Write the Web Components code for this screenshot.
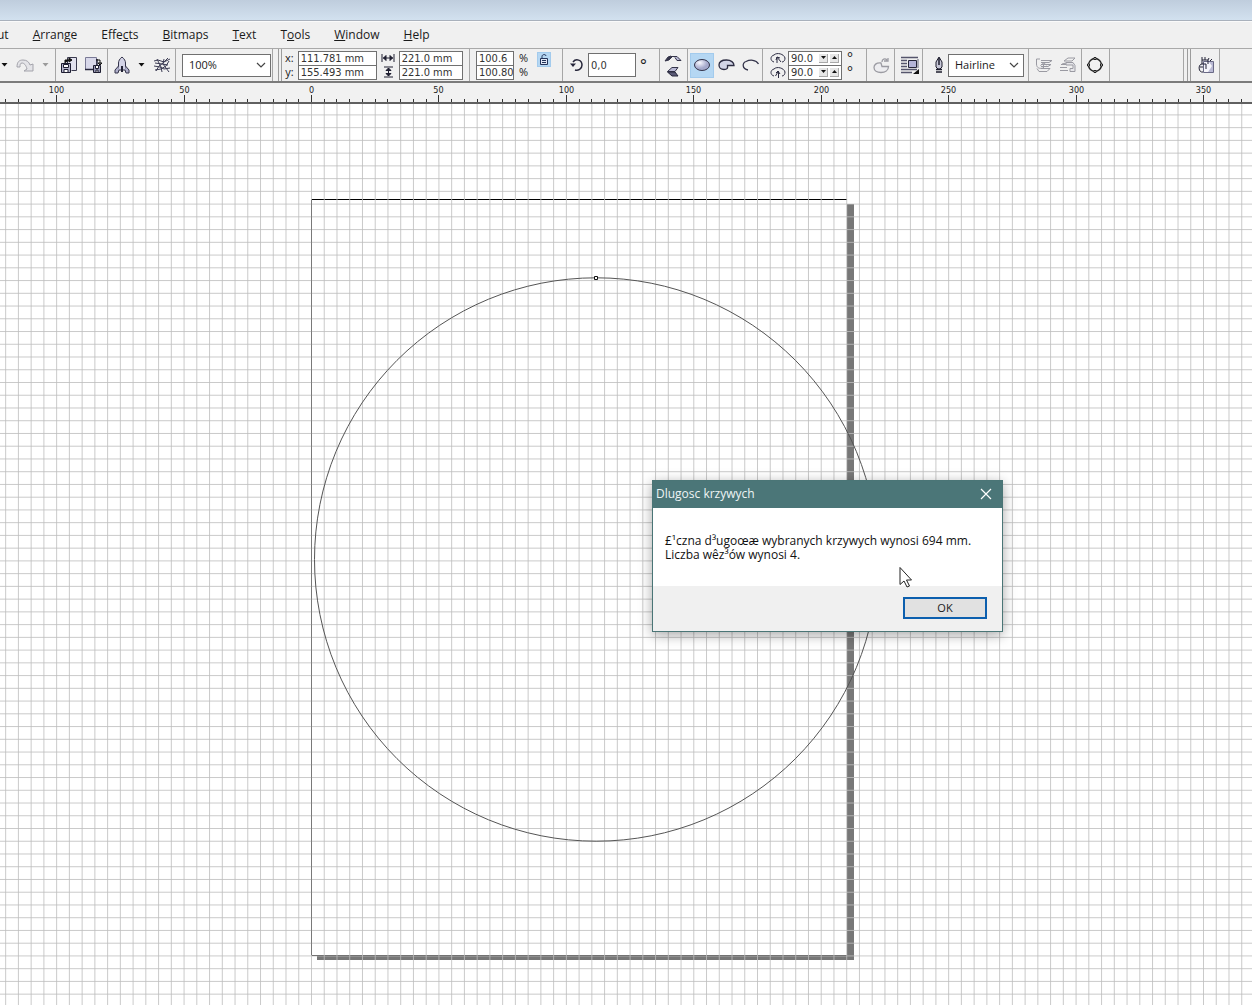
<!DOCTYPE html>
<html lang="en">
<head>
<meta charset="utf-8">
<title>Drawing editor</title>
<style>
html,body{height:100%;margin:0}
body{overflow:hidden;background:#fff;color:#1a1a1a;font:12px/16px "Open Sans","Noto Sans",sans-serif}
</style>
</head>
<body>
<drawing-app></drawing-app>
<script>
const ICONS = {
  redo: [18,16,`<path d="M1 10C1 5 3 3 7 3c4 0 6 2 7 5l3-1v7H8l3-2c-1-4-3-6-5-6-2 0-2 2-2 4z" fill="#e4e4e8" stroke="#a3a3ab"/>`],
  importer: [18,18,`<path d="M7.500 8V1.500h9v13h-5" fill="#e2e2ee" stroke="#3a3a4e"/><path d="M5 7V4h5m-1-2v4l3-2z" stroke="#111" fill="#111"/><path d="M1.500 7.500h9v9h-9z" fill="#b4b4cc" stroke="#1c1c30"/><path d="M3.500 8.500h5v3h-5zM4 16v-2.500h4V16" fill="#fff" stroke="#1c1c30"/>`],
  exporter: [18,18,`<path d="M1.500 1.500h11v12h-11z" fill="#d8d8ea" stroke="#7a7a96"/><path d="M1 13.500h12V3" stroke="#26263c" stroke-width="1.500"/><path d="M12 4h4v4m-2-1h4l-2 2z" stroke="#111" fill="none"/><path d="M9.500 9.500h7v7h-7z" fill="#9a9ab8" stroke="#1c1c30"/><path d="M11.500 9.500h3v3h-3zM12 16v-2h2v2" fill="#fff" stroke="#1c1c30"/>`],
  rocket: [16,18,`<path d="M4.500 14V7c0-2 1-4 3.500-6 2.500 2 3.500 4 3.500 6v7z" fill="#d3d3e6" stroke="#34344a"/><path d="M4.500 10L1 14v3h3l1-3M11.500 10l3.500 4v3h-3l-1-3" fill="#b0b0cc" stroke="#34344a"/><path d="M8 10v6" stroke="#222234" stroke-width="2"/>`],
  web: [18,16,`<path d="M1 4l4-1 6 2 6-3M3 14l3-5 4-3 5-5M1 9l6 1 4 2 6-1M4 2l4 8 1 5M11 2l-1 5 3 4 3 4M16 4l-3 5-5 3-6 1M2 6l7 1 6 1" fill="none" stroke="#3c3c54"/>`],
  hsize: [14,10,`<path d="M1 1v8M13 1v8M2 5h10M5 2.500L2.500 5 5 7.500zM9 2.500L11.500 5 9 7.500z" fill="#1e1e30" stroke="#1e1e30"/>`],
  vsize: [14,12,`<path d="M3 1h9M3 11h9M7.500 2v8M5 4.500L7.500 2 10 4.500zM5 7.500L7.500 10 10 7.500z" fill="#1e1e30" stroke="#1e1e30"/>`],
  lock: [14,15,`<path d="M3.500 6.500h7v6h-7z" fill="#dfe6f4" stroke="#24345a"/><path d="M5 6V4.500C5 2 9 2 9 4M5 8.500h4M5 10.500h4" fill="none" stroke="#24345a"/>`],
  rotate: [15,14,`<path d="M4 4c3-4 9-2 9 3 0 4-4 6-7 5" stroke="#26263a" stroke-width="1.500"/><path d="M1 5.500h6L4 9z" fill="#26263a"/>`],
  mirrorh: [18,9,`<path d="M1 7l3-4 3-1 1 1-3 3z" fill="#34344a" stroke="#34344a"/><path d="M7 2.500h6l4 4h-4l-2-3" fill="#b8b8d4" stroke="#34344a"/>`],
  mirrorv: [18,10,`<path d="M14 .5H8L3.500 4.500H11z" fill="#b8b8d4" stroke="#34344a"/><path d="M3.500 5H11l3 4H8z" fill="#5a5a76" stroke="#26263a"/>`],
  ellipse: [18,14,`<defs><radialGradient id="e" cx=".35" cy=".3"><stop stop-color="#f8f8ff"/><stop offset="1" stop-color="#a5a9cc"/></radialGradient></defs><ellipse cx="9" cy="7" rx="7.500" ry="5.500" fill="url(#e)" stroke="#33334a"/>`],
  pie: [18,14,`<path d="M9.500 7.500h6.500c0-3-3-5.500-7.500-5.500S1 4 1 7c0 2.500 2 4.500 5 4.500 3 0 4-1 3.500-4z" fill="#d2d4e6" stroke="#2c2c42" stroke-width="1.300"/>`],
  arc: [18,14,`<path d="M6 12C0 11 0 5 4 3.500c4-2 10-2 12.500 2.500" fill="none" stroke="#33334a" stroke-width="1.300"/>`],
  angle1: [16,13,`<path d="M4 10C0 9 0 4 4 3c3-3 10-1 11 3 0 2-1 4-3 4M7 11V5l4 5M6 8l1-3 3 1" fill="none" stroke="#2c2c42"/>`],
  angle2: [16,13,`<path d="M4 10C0 9 0 4 4 3c3-3 10-1 11 3 0 2-1 4-3 4M8.500 12V5l-3 5M6 7l2-2 2 3" fill="none" stroke="#2c2c42"/>`],
  direction: [18,18,`<path d="M15.500 10.500H9L8 7C3 6.500 1 9 1 11.500c0 3 3 5 7 5s7.500-2 7.500-6z" fill="#ededf0" stroke="#9b9ba2" stroke-width="1.300"/><path d="M9 6c0-3 3-4 5-2M11 5h4V2" fill="none" stroke="#9b9ba2" stroke-width="1.300"/>`],
  wrap: [20,20,`<path d="M1 2.500h17M1 5.500h6M1 8.500h6M1 11.500h6M1 14.500h16M1 17.500h11" stroke="#55556c" stroke-width="1.500"/><path d="M8.500 5.500h8v7h-8z" fill="#b4b4d8" stroke="#26263a"/><path d="M18 4v9" stroke="#66667c"/><path d="M19 14v5h-6z" fill="#111"/>`],
  pen: [12,18,`<path d="M6 1l3 5v5L7 13H5l-2-2V6z" fill="#c8c8d8" stroke="#1c1c2c"/><path d="M6 2v7M3 13.500h6M3 16h6" stroke="#1c1c2c" stroke-width="1.500"/>`],
  front: [18,16,`<path d="M6 3.500h11l-3 2H6M6 7.500h10l-3 2H6M6 11.500h9l-3 3H4l-2-3" stroke="#9a9aa2"/><path d="M5 2H1.500v5c0 4 3 5 7 4V6.500m-3 2l3-2.500 3 2" fill="none" stroke="#9a9aa2"/>`],
  back: [18,16,`<path d="M5 4l4-3h7l-3 3zM3 7l4-1M2 7.500h6M1 10.500h7M1 13.500h8" stroke="#9a9aa2" fill="none"/><path d="M7 5.500h7l2 3v6h-5v-3h3V8H7z" fill="#e6e6ea" stroke="#9a9aa2"/>`],
  curves: [18,18,`<circle cx="9" cy="9" r="6.500" fill="none" stroke="#222" stroke-width="1.400"/><path d="M8 1.500h2v2H8zM8 14.500h2v2H8zM1.500 8h2v2h-2zM14.500 8h2v2h-2z" fill="#f0f0f0" stroke="#222"/>`],
  macro: [18,18,`<path d="M6.500 5.500h10v11h-10z" fill="#b9b9d4" stroke="#6a6a86"/><path d="M7 6h5l3 4-4 6H7z" fill="#f6f6fb"/><path d="M6 16c-5 1-5-8-1-8h4v5M5 8V4h6v4M5 1v3M8 1v3M12 2l-1 2M15 3l-2 2M3 11h3" fill="none" stroke="#222236"/>`],
  down: [7,4,`<path d="M.5 0h6L3.500 3.500z" fill="#111"/>`],
  downoff: [7,4,`<path d="M.5 0h6L3.500 3.500z" fill="#9b9b9b"/>`]
};
const icon = n => { const [w,h,p] = ICONS[n]; return `<svg width="${w}" height="${h}" viewBox="0 0 ${w} ${h}" fill="none" aria-hidden="true">${p}</svg>`; };

class Base extends HTMLElement {
  connectedCallback(){
    if(this.shadowRoot) return;
    this.attachShadow({mode:'open'}).innerHTML = '<style>:host{box-sizing:border-box}*{box-sizing:border-box}svg{display:block}</style>' + this.render();
    this.ready?.();
  }
  attr(n){ return this.getAttribute(n) ?? ''; }
}

customElements.define('menu-item', class extends Base {
  render(){ return `<style>:host{display:block}button{all:unset;display:block;white-space:pre}</style><button><slot></slot></button>`; }
});
customElements.define('menu-bar', class extends Base {
  render(){ return `<style>:host{display:flex;gap:24px;align-items:center;height:27px;background:#f0f0f0;overflow:hidden;border-top:1px solid #fafafa}
    ::slotted(:first-child){margin-left:-3px}</style><slot></slot>`; }
});
customElements.define('tool-icon', class extends Base {
  render(){ return `<style>:host{display:block;flex:none}button{all:unset;display:grid;place-items:center}
    :host([on]) button{background:#b5d7f3;outline:1px solid #a3cbed;outline-offset:-1px;width:24px;height:25px}
    :host([name=lock]) button{width:14px;height:15px}</style>
    <button aria-label="${this.attr('name')}">${icon(this.attr('name'))}</button>`; }
});
customElements.define('tool-group', class extends Base {
  render(){ return `<style>:host{display:flex;flex:none;align-items:center;height:100%;width:var(--w);gap:var(--g,6px);padding-left:6px;border-right:1px solid #a6a6a6}
    </style><slot></slot>`; }
});
customElements.define('tool-grip', class extends Base {
  render(){ return `<style>:host{display:flex;flex:none;width:9px;height:100%;gap:2px;justify-content:flex-end}i{width:1px;background:#9c9c9c}</style><i></i><i></i>`; }
});
customElements.define('tool-stack', class extends Base {
  render(){ return `<style>:host{display:grid;flex:none;grid-auto-rows:14px;align-items:center;justify-items:center;font-size:11px;line-height:14px}</style><slot></slot>`; }
});
customElements.define('num-field', class extends Base {
  render(){
    const spin = this.hasAttribute('spin') ? `<span><button aria-label="Decrease"><svg width="5" height="4"><path d="M0 0h5L2.500 3z" fill="#111"/></svg></button><button aria-label="Increase"><svg width="5" height="4"><path d="M0 3h5L2.500 0z" fill="#111"/></svg></button></span>` : '';
    return `<style>:host{display:flex;align-items:center;width:var(--w);height:var(--h,15px);background:#fff;border:1px solid #707070}
    input{flex:1;min-width:0;width:100%;height:100%;border:0;padding:1px 0 0 2px;background:none;outline:0;color:#333;font:11px "DejaVu Sans Condensed","DejaVu Sans",sans-serif}
    span{display:flex;gap:2px;padding-right:2px}button{display:grid;place-items:center;width:9px;height:9px;padding:0;background:#e6e6e6;border:1px solid #a8a8a8;border-width:0 1px 1px 0}</style>
    <input aria-label="${this.attr('label')}" value="${this.attr('value')}">${spin}`; }
});
customElements.define('drop-box', class extends Base {
  render(){ return `<style>:host{display:grid;flex:none;width:var(--w);height:23px;border:1px solid #707070;background:#fff}
    select,svg{grid-area:1/1}select{appearance:none;border:0;background:none;outline:0;padding:0 0 1px 6px;margin:0;width:100%;color:#1a1a1a;font:11px "Open Sans","Noto Sans",sans-serif}
    svg{justify-self:end;align-self:center;margin-right:4px;pointer-events:none}</style>
    <select aria-label="${this.attr('label')}"><option>${this.attr('value')}</option></select>
    <svg width="10" height="6" fill="none"><path d="M1 1l4 4 4-4" stroke="#444" stroke-width="1.200"/></svg>`; }
});
customElements.define('tool-bar', class extends Base {
  render(){ return `<style>:host{display:flex;height:35px;background:#f0f0f0;border-top:1px solid #a9a9a9;border-bottom:2px solid #7b7b7b;overflow:hidden}</style><slot></slot>`; }
});

const MM = 2.5486, ORIGIN = 311.5;
customElements.define('mm-ruler', class extends Base {
  render(){ return `<style>:host{display:block;height:21px;background:#f1f1f1;border-bottom:2px solid #606060;overflow:hidden}svg{width:100%;height:19px}text{font:9px "DejaVu Sans Condensed","DejaVu Sans",sans-serif;text-anchor:middle;fill:#222}</style><svg></svg>`; }
  ready(){ this.draw(); addEventListener('resize', () => this.draw()); }
  draw(){
    let s = '';
    for(let i=-24; ORIGIN + i*5*MM < innerWidth; i++){
      const x = Math.round(ORIGIN + i*5*MM - .5) + .5, major = i%10===0;
      s += `<path d="M${x} ${major?12:16}V19" stroke="#333"/>`;
      if(major && x < innerWidth - 10) s += `<text x="${x}" y="10">${Math.abs(i*5)}</text>`;
    }
    this.shadowRoot.querySelector('svg').innerHTML = s;
  }
});
customElements.define('drawing-canvas', class extends Base {
  render(){
    const top = 95.5, step = 5*MM, bottom = top + 297*MM;
    let g = '';
    for(let i=-24;i<400;i++) g += `M${(ORIGIN+i*step).toFixed(2)} 0V4000`;
    for(let i=-68;i<300;i++) g += `M0 ${(bottom-.5+i*step).toFixed(2)}H5000`;
    return `<style>:host{display:block;background:#fff;overflow:hidden;min-height:0}svg{width:100%;height:100%}</style>
    <svg role="img" aria-label="Page with a circle"><g fill="#777"><path d="M847 100h7v756H317v-5h530z"/></g>
    <path d="M311 95.500h536" stroke="#000"/><path d="M311.500 95v757" stroke="#444"/><path d="M311 851.500h536" stroke="#333"/>
    <path d="${g}" stroke="#bdbdbd" stroke-opacity=".8"/>
    <path d="M311.500 96v755" stroke="#666" stroke-opacity=".7"/>
    <circle cx="596.200" cy="455.500" r="281.700" fill="none" stroke="#555"/>
    <path d="M594.500 172.500h3v3h-3z" fill="#fff" stroke="#111"/></svg>`; }
});
customElements.define('message-box', class extends Base {
  render(){ return `<style>:host{display:flex;flex-direction:column;border:1px solid #4a7576;background:#fff;box-shadow:0 3px 12px rgba(0,0,0,.35)}
    header{display:flex;align-items:center;justify-content:space-between;height:27px;padding:0 10px 2px 3px;background:#4b7678;color:#eef4f4}
    h1{font:inherit;margin:0}button{all:unset}.msg{padding:26px 12px 24px;line-height:14px;color:#111;white-space:nowrap}
    footer{display:flex;justify-content:flex-end;padding:11px 15px 12px;background:#f0f0f0}
    footer button{box-sizing:border-box;width:84px;height:22px;border:2px solid #0c5fae;background:#e1e1e1;text-align:center;font-size:11px;line-height:18px}</style>
    <header><h1>${this.attr('heading')}</h1><button aria-label="Close"><svg width="12" height="12"><path d="M1 1l10 10M11 1L1 11" stroke="#fff" stroke-width="1.200"/></svg></button></header>
    <div class="msg"><slot></slot></div><footer><button>OK</button></footer>`; }
});

customElements.define('drawing-app', class extends Base {
  render(){ return `<style>
    :host{display:grid;grid-template-rows:21px 27px 35px 21px minmax(0,1fr);height:100vh;position:relative;overflow:hidden}
    .title{background:linear-gradient(#bfcddd,#d2e1ef);border-bottom:1px solid #a9b1bc}
    .pair{--w:79px}.size{--w:64px}.pct{--w:38px}.angle{--w:54px}
    num-field+num-field{margin-top:-1px}
    .fields{display:flex;flex-direction:column;flex:none}
    message-box{position:absolute;left:652px;top:480px;width:351px}
    .cursor{position:absolute;left:899px;top:566px}
    .deg{font-size:16px;line-height:14px}
    .degs{font-size:14px;height:14px;line-height:14px}
    </style>
    <div class="title"></div>
    <menu-bar><menu-item>ut</menu-item><menu-item><u>A</u>rrange</menu-item><menu-item>Effe<u>c</u>ts</menu-item><menu-item><u>B</u>itmaps</menu-item><menu-item><u>T</u>ext</menu-item><menu-item>T<u>o</u>ols</menu-item><menu-item><u>W</u>indow</menu-item><menu-item><u>H</u>elp</menu-item></menu-bar>
    <tool-bar>
      <tool-group style="--w:56px;--g:8px;padding-left:1px"><tool-icon name="down"></tool-icon><tool-icon name="redo"></tool-icon><tool-icon name="downoff"></tool-icon></tool-group>
      <tool-group style="--w:52px;--g:6px;padding-left:4px"><tool-icon name="importer"></tool-icon><tool-icon name="exporter"></tool-icon></tool-group>
      <tool-group style="--w:68px;--g:8px"><tool-icon name="rocket"></tool-icon><tool-icon name="down"></tool-icon><tool-icon name="web"></tool-icon></tool-group>
      <tool-group style="--w:97px"><drop-box style="--w:89px" label="Zoom" value="100%"></drop-box></tool-group>
      <tool-grip></tool-grip>
      <tool-group style="--w:188px;--g:4px;padding-left:3px">
        <tool-stack><span>x:</span><span>y:</span></tool-stack>
        <div class="fields pair"><num-field label="x" value="111.781 mm"></num-field><num-field label="y" value="155.493 mm"></num-field></div>
        <tool-stack><tool-icon name="hsize"></tool-icon><tool-icon name="vsize"></tool-icon></tool-stack>
        <div class="fields size"><num-field label="Width" value="221.0 mm"></num-field><num-field label="Height" value="221.0 mm"></num-field></div>
      </tool-group>
      <tool-group style="--w:93px;--g:5px"><div class="fields pct"><num-field label="Horizontal scale" value="100.6"></num-field><num-field label="Vertical scale" value="100.80"></num-field></div>
        <tool-stack><span>%</span><span>%</span></tool-stack><tool-icon name="lock" on style="align-self:flex-start;padding:3px 0 0 4px"></tool-icon></tool-group>
      <tool-group style="--w:97px;--g:4px"><tool-icon name="rotate"></tool-icon><num-field style="--w:48px;--h:24px" label="Rotation" value="0,0"></num-field><span class="deg">°</span></tool-group>
      <tool-group style="--w:28px;padding-left:4px"><tool-stack><tool-icon name="mirrorh"></tool-icon><tool-icon name="mirrorv"></tool-icon></tool-stack></tool-group>
      <tool-group style="--w:75px;--g:4px;padding-left:2px"><tool-icon name="ellipse" on></tool-icon><tool-icon name="pie"></tool-icon><tool-icon name="arc" style="padding-left:2px"></tool-icon></tool-group>
      <tool-group style="--w:104px;--g:2px;padding-left:7px"><tool-stack><tool-icon name="angle1"></tool-icon><tool-icon name="angle2"></tool-icon></tool-stack>
        <div class="fields angle"><num-field spin label="Start angle" value="90.0"></num-field><num-field spin label="End angle" value="90.0"></num-field></div>
        <tool-stack style="padding-left:3px"><span class="degs">°</span><span class="degs">°</span></tool-stack></tool-group>
      <tool-group style="--w:28px"><tool-icon name="direction"></tool-icon></tool-group>
      <tool-group style="--w:28px;padding-left:5px"><tool-icon name="wrap"></tool-icon></tool-group>
      <tool-group style="--w:106px;--g:3px;padding-left:10px"><tool-icon name="pen"></tool-icon><drop-box style="--w:76px" label="Outline width" value="Hairline"></drop-box></tool-group>
      <tool-group style="--w:53px"><tool-icon name="front"></tool-icon><tool-icon name="back"></tool-icon></tool-group>
      <tool-group style="--w:28px;padding-left:4px"><tool-icon name="curves"></tool-icon></tool-group>
      <tool-group style="--w:74px"></tool-group>
      <tool-grip style="width:7px"></tool-grip>
      <tool-group style="--w:29px"><tool-icon name="macro"></tool-icon></tool-group>
    </tool-bar>
    <mm-ruler></mm-ruler>
    <drawing-canvas></drawing-canvas>
    <message-box role="dialog" heading="Dlugosc krzywych">£¹czna d³ugoœæ wybranych krzywych wynosi 694 mm.<br>Liczba wêz³ów wynosi 4.</message-box>
    <svg class="cursor" width="14" height="23" viewBox="0 0 14 23"><path d="M1 1.500v17l4-3.500 3 6 2.500-1-3-6H12.500z" fill="#fff" stroke="#222"/></svg>`; }
});
</script>
</body>
</html>
